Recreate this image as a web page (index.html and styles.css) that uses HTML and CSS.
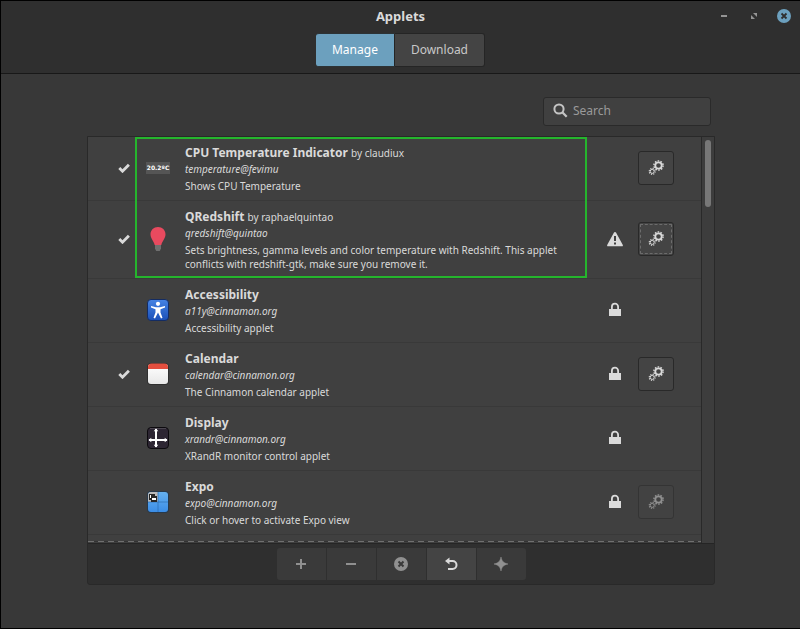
FILE: index.html
```html
<!DOCTYPE html>
<html lang="en">
<head>
<meta charset="utf-8">
<meta name="viewport" content="width=device-width, initial-scale=1">
<title>Applets</title>
<link rel="stylesheet" href="styles.css">
</head>
<body>
<svg class="sprite" aria-hidden="true">
  <symbol id="check" viewBox="0 0 12 10">
    <path d="M1.3 5 4.5 8.2 10.9 1.7" fill="none" stroke="currentColor" stroke-width="2.8"/>
  </symbol>
  <symbol id="gears" viewBox="0 0 16 16">
    <g fill="none" stroke="currentColor">
      <circle cx="10.5" cy="5.5" r="3.2" stroke-width="1.8"/>
      <circle cx="10.5" cy="5.5" r="4.6" stroke-width="1.4" stroke-dasharray="1.6 1.29"/>
      <circle cx="4.2" cy="11.4" r="2" stroke-width="1"/>
      <circle cx="4.2" cy="11.4" r="3" stroke-width="1.1" stroke-dasharray="1.2 1.156"/>
    </g>
  </symbol>
  <symbol id="lock" viewBox="0 0 16 16">
    <path d="M2 7h12v7H2z" fill="currentColor"/>
    <path d="M4.900 7.500V4.800a3.100 3.100 0 0 1 6.200 0v2.700" fill="none" stroke="currentColor" stroke-width="1.800"/>
  </symbol>
  <symbol id="warning" viewBox="0 0 16 16">
    <path d="M8 .9c.5 0 .8.3 1 .7l6.700 12.100c.5.9.1 1.600-.8 1.600H1.100c-.9 0-1.300-.7-.8-1.600L7 1.600c.2-.4.5-.7 1-.7z" fill="currentColor"/>
    <path d="M7 5h2v5H7zM7 11.500h2v2H7z" fill="#404040"/>
  </symbol>
</svg>

<div class="window">
  <header class="titlebar">
    <div class="title-row">
      <h1 class="title">Applets</h1>
      <div class="window-controls">
        <button class="control" type="button" aria-label="Minimize">
          <svg width="14" height="14" viewBox="0 0 14 14"><path d="M4 6h6v2H4z" fill="#949494"/></svg>
        </button>
        <button class="control" type="button" aria-label="Maximize">
          <svg width="14" height="14" viewBox="0 0 14 14"><path d="M6 4h4v4zM4 6v4h4z" fill="#949494"/></svg>
        </button>
        <button class="control" type="button" aria-label="Close">
          <svg width="14" height="14" viewBox="0 0 14 14"><circle cx="7" cy="7" r="7" fill="#6ca0be"/><path d="m4.500 4.500 5 5m0-5-5 5" stroke="#2f2f2f" stroke-width="1.800"/></svg>
        </button>
      </div>
    </div>
    <nav class="tabs">
      <button class="tab tab-active" type="button">Manage</button>
      <button class="tab" type="button">Download</button>
    </nav>
  </header>

  <main class="content">
    <label class="search">
      <svg width="15" height="15" viewBox="0 0 15 15" aria-hidden="true"><circle cx="6" cy="6" r="4.600" fill="none" stroke="#c4c4c4" stroke-width="2"/><path d="m9.300 9.300 4.400 4.400" stroke="#c4c4c4" stroke-width="2.300"/></svg>
      <input class="search-input" type="text" placeholder="Search" aria-label="Search">
    </label>

    <section class="panel">
      <div class="scroller">
        <ul class="list">
          <li class="row">
            <svg class="check" role="img" aria-label="Enabled"><use href="#check"/></svg>
            <svg class="icon" viewBox="0 0 24 24"><path d="M0 6h24v12H0z" fill="#555"/><text class="reading" x="12" y="14" text-anchor="middle">20.2ºC</text></svg>
            <div class="info">
              <h2 class="name">CPU Temperature Indicator <span class="author">by claudiux</span></h2>
              <p class="uuid">temperature@fevimu</p>
              <p class="description">Shows CPU Temperature</p>
            </div>
            <button class="settings" type="button" aria-label="Configure"><svg class="glyph"><use href="#gears"/></svg></button>
          </li>
          <li class="row">
            <svg class="check" role="img" aria-label="Enabled"><use href="#check"/></svg>
            <svg class="icon" viewBox="0 0 24 24"><path d="M9 17h6v4.500L13.800 24h-3.600L9 21.500z" fill="#6f6f6f"/><path d="M12 0c4.300 0 7.500 3.100 7.500 7.300 0 4.200-3 6.200-4.200 10.700H8.700C7.500 13.500 4.500 11.500 4.500 7.300 4.500 3.100 7.700 0 12 0z" fill="#e84a5f"/></svg>
            <div class="info">
              <h2 class="name">QRedshift <span class="author">by raphaelquintao</span></h2>
              <p class="uuid">qredshift@quintao</p>
              <p class="description">Sets brightness, gamma levels and color temperature with Redshift. This applet conflicts with redshift-gtk, make sure you remove it.</p>
            </div>
            <svg class="status" role="img" aria-label="Warning"><use href="#warning"/></svg>
            <button class="settings settings-focused" type="button" aria-label="Configure"><svg class="glyph"><use href="#gears"/></svg></button>
          </li>
          <li class="row">
            <svg class="icon" viewBox="0 0 24 24">
              <defs><linearGradient id="blue" x2="0" y2="1"><stop stop-color="#4583e4"/><stop offset="1" stop-color="#1b50b8"/></linearGradient></defs>
              <rect x="1.500" y="1.500" width="21" height="21" rx="3.500" fill="url(#blue)" stroke="#142c62"/>
              <circle cx="12" cy="5.800" r="2.100" fill="#fff"/>
              <path d="m5 8 5 1.200h4L19 8v1.500l-4.500 1.700v3.300l2 5.300-1.500.6-3-6-3 6-1.500-.6 2-5.300v-3.300L5 9.500z" fill="#fff"/>
            </svg>
            <div class="info">
              <h2 class="name">Accessibility</h2>
              <p class="uuid">a11y@cinnamon.org</p>
              <p class="description">Accessibility applet</p>
            </div>
            <svg class="status" role="img" aria-label="Locked"><use href="#lock"/></svg>
          </li>
          <li class="row">
            <svg class="check" role="img" aria-label="Enabled"><use href="#check"/></svg>
            <svg class="icon" viewBox="0 0 24 24">
              <defs><linearGradient id="paper" x2="0" y2="1"><stop stop-color="#fff"/><stop offset="1" stop-color="#e8e8e8"/></linearGradient></defs>
              <rect x="1" y="1" width="22" height="22" rx="4" fill="#303030"/>
              <rect x="2" y="2" width="20" height="20" rx="3" fill="url(#paper)"/>
              <path d="M2 7V5a3.500 3.500 0 0 1 3.500-3.500h13A3.500 3.500 0 0 1 22 5v2z" fill="#e44e3e"/>
            </svg>
            <div class="info">
              <h2 class="name">Calendar</h2>
              <p class="uuid">calendar@cinnamon.org</p>
              <p class="description">The Cinnamon calendar applet</p>
            </div>
            <svg class="status" role="img" aria-label="Locked"><use href="#lock"/></svg>
            <button class="settings" type="button" aria-label="Configure"><svg class="glyph"><use href="#gears"/></svg></button>
          </li>
          <li class="row">
            <svg class="icon" viewBox="0 0 24 24">
              <rect x="1.500" y="1.500" width="21" height="21" rx="3.500" fill="#2d2633" stroke="#0c0a0e"/>
              <path d="M4 2.500h16" stroke="#4b4650"/>
              <path d="M10 3v18M3 14h18" stroke="#fff" stroke-width="2"/>
              <path d="m7.700 5.300 2.300-2.800 2.300 2.800zM7.700 18.700l2.300 2.800 2.300-2.800zM5.300 11.700 2.500 14l2.800 2.300zM18.700 11.700l2.800 2.300-2.800 2.300z" fill="#fff"/>
            </svg>
            <div class="info">
              <h2 class="name">Display</h2>
              <p class="uuid">xrandr@cinnamon.org</p>
              <p class="description">XRandR monitor control applet</p>
            </div>
            <svg class="status" role="img" aria-label="Locked"><use href="#lock"/></svg>
          </li>
          <li class="row">
            <svg class="icon" viewBox="0 0 24 24">
              <defs>
                <linearGradient id="sky" x2="0" y2="1"><stop stop-color="#65b1f1"/><stop offset="1" stop-color="#3b8de6"/></linearGradient>
              </defs>
              <rect x="1" y="1" width="22" height="22" rx="4" fill="#28394b"/>
              <rect x="2" y="2" width="20" height="20" rx="3" fill="url(#sky)"/>
              <path d="M2 12V5a3 3 0 0 1 3-3h7v10z" fill="#b9b9b9"/>
              <path d="M12 2v20M2 12h20" stroke="#2c6cb0" stroke-opacity=".7"/>
              <path d="M3 4h6v2h2v6H5v-2H3z" fill="#272727"/>
              <path d="M4 5h1v3H4zM6 8h4v2H6z" fill="#fff"/>
            </svg>
            <div class="info">
              <h2 class="name">Expo</h2>
              <p class="uuid">expo@cinnamon.org</p>
              <p class="description">Click or hover to activate Expo view</p>
            </div>
            <svg class="status" role="img" aria-label="Locked"><use href="#lock"/></svg>
            <button class="settings" type="button" aria-label="Configure" disabled><svg class="glyph"><use href="#gears"/></svg></button>
          </li>
        </ul>
        <div class="scrollbar"><div class="thumb"></div></div>
        <div class="highlight"></div>
      </div>

      <footer class="toolbar">
        <button class="tool" type="button" aria-label="Add" disabled><svg class="glyph" viewBox="0 0 16 16"><path d="M8 3v10M3 8h10" stroke="currentColor" stroke-width="2"/></svg></button>
        <button class="tool" type="button" aria-label="Remove" disabled><svg class="glyph" viewBox="0 0 16 16"><path d="M3 8h10" stroke="currentColor" stroke-width="2"/></svg></button>
        <button class="tool" type="button" aria-label="Uninstall" disabled><svg class="glyph" viewBox="0 0 16 16"><circle cx="8" cy="8" r="7" fill="currentColor"/><path d="m5.500 5.500 5 5m0-5-5 5" stroke="#3a3a3a" stroke-width="2"/></svg></button>
        <button class="tool" type="button" aria-label="Restore defaults"><svg class="glyph" viewBox="0 0 16 16"><path d="M4 5h5.500a4 4 0 0 1 0 8H5" fill="none" stroke="currentColor" stroke-width="2"/><path d="M6.500 1.500v7L2 5z" fill="currentColor"/></svg></button>
        <button class="tool" type="button" aria-label="New" disabled><svg class="glyph" viewBox="0 0 16 16"><path d="M8 1c1 4.500 2.500 6 7 7-4.500 1-6 2.500-7 7-1-4.500-2.500-6-7-7 4.500-1 6-2.500 7-7z" fill="currentColor" stroke="currentColor" stroke-width=".5"/></svg></button>
      </footer>
    </section>
  </main>
</div>
</body>
</html>
```
FILE: styles.css
```css
* {
  box-sizing: border-box;
}

body {
  margin: 0;
  background: #383838;
  color: #dadada;
  font-family: "Noto Sans", sans-serif;
  font-size: 13px;
}

button {
  margin: 0;
  padding: 0;
  border: 0;
  background: none;
  color: inherit;
  font: inherit;
}

h1,
h2,
p,
ul {
  margin: 0;
  padding: 0;
}

.sprite {
  display: none;
}

.window {
  display: flex;
  flex-direction: column;
  min-height: 100vh;
  border: 1px solid #000;
  border-right: 0;
}

/* Title bar */

.titlebar {
  padding: 1px 0 6px;
  border-bottom: 1px solid #181818;
  background: #2f2f2f;
}

.title-row {
  display: grid;
  grid-template-columns: 1fr auto 1fr;
  align-items: center;
  height: 31px;
  padding-bottom: 4px;
}

.title {
  grid-column: 2;
  font-size: 13px;
  line-height: 20px;
}

.window-controls {
  display: flex;
  justify-content: flex-end;
  gap: 16px;
  padding-right: 9px;
}

.control {
  display: flex;
}

.tabs {
  display: flex;
  justify-content: center;
}

.tab {
  height: 34px;
  padding: 0 16px 2px;
  border: 1px solid #252525;
  border-left-width: 0;
  border-radius: 0 3px 3px 0;
  background: #444;
  color: #c8c8c8;
  font-size: 12px;
}

.tab-active {
  border-top-color: #2c3336;
  border-bottom-color: #2c3336;
  border-radius: 3px 0 0 3px;
  background: #6ca0be;
  color: #fff;
}

/* Content */

.content {
  flex: 1;
  display: flex;
  flex-direction: column;
  padding: 23px 85px 43px 86px;
}

.search {
  align-self: flex-end;
  display: flex;
  align-items: center;
  gap: 5px;
  width: 168px;
  height: 29px;
  margin: 0 4px 10px 0;
  padding: 0 9px 2px;
  border: 1px solid #2a2a2a;
  border-radius: 3px;
  background: #404040;
}

.search-input {
  flex: 1;
  min-width: 0;
  padding: 0;
  border: 0;
  outline: 0;
  background: none;
  color: #dadada;
  font: inherit;
  font-size: 12px;
}

.search-input::placeholder {
  color: #9a9a9a;
  opacity: 1;
}

.panel {
  border: 1px solid #292929;
  border-radius: 0 0 3px 3px;
  background: #2f2f2f;
}

.scroller {
  position: relative;
  display: flex;
  background: #404040;
}

.list {
  flex: 1;
  min-width: 0;
  padding-bottom: 8px;
  list-style: none;
  background: repeating-linear-gradient(90deg, #707070 0 6px, #333 6px 10px) 0 calc(100% - 1px) / 100% 1px no-repeat;
}

.row {
  display: grid;
  grid-template-columns: 13px 24px 1fr 16px 36px;
  align-items: center;
  column-gap: 15px;
  padding: 6px 27px 7px 30px;
  border-bottom: 1px solid #393939;
}

.check {
  grid-area: 1 / 1;
  width: 12px;
  height: 10px;
}

.icon {
  grid-area: 1 / 2;
  width: 24px;
  height: 24px;
}

.reading {
  fill: #fff;
  font-family: "DejaVu Sans", sans-serif;
  font-size: 6px;
  font-weight: 700;
}

.info {
  grid-area: 1 / 3;
}

.name {
  font-size: 12px;
  line-height: 19px;
}

.author {
  font-size: 10px;
  font-weight: 400;
  line-height: 14px;
}

.uuid {
  font-size: 10px;
  font-style: italic;
  line-height: 14px;
}

.description {
  padding-top: 3px;
  font-size: 10px;
  line-height: 14px;
}

.status {
  grid-area: 1 / 4;
  width: 16px;
  height: 16px;
}

.settings {
  grid-area: 1 / 5;
  display: flex;
  align-items: center;
  justify-content: center;
  width: 36px;
  height: 34px;
  border: 1px solid #292929;
  border-radius: 3px;
  background: #444;
}

.settings:disabled {
  border-color: #343434;
  background: #424242;
  color: #909090;
}

.settings-focused {
  outline: 1px dashed #6c6c6c;
  outline-offset: -3px;
}

.glyph {
  width: 16px;
  height: 16px;
}

.scrollbar {
  width: 13px;
  padding: 3px 3px 0;
  border-left: 1px solid #292929;
  background: #3d3d3d;
}

.thumb {
  width: 6px;
  height: 67px;
  border-radius: 3px;
  background: #777;
}

/* Frame drawn over the first two rows */
.highlight {
  position: absolute;
  top: 0;
  right: 127px;
  left: 47px;
  height: 141px;
  border: 2px solid #25b52d;
  pointer-events: none;
}

.toolbar {
  display: flex;
  justify-content: center;
  gap: 1px;
  padding: 4px 0;
  border-top: 1px solid #252525;
}

.tool {
  display: flex;
  align-items: center;
  justify-content: center;
  width: 49px;
  height: 32px;
  background: #444;
}

.tool:first-child {
  border-radius: 3px 0 0 3px;
}

.tool:last-child {
  border-radius: 0 3px 3px 0;
}

.tool:disabled {
  background: #3a3a3a;
  color: #909090;
}
```
